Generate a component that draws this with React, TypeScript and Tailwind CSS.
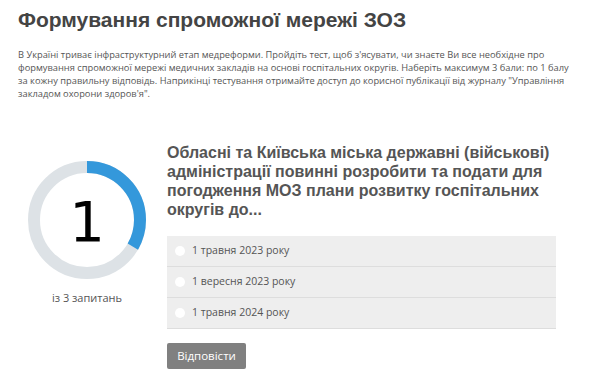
import React from "react";

const body = { fontFamily: '"Open Sans", "Noto Sans", sans-serif' };
const arial = { fontFamily: '"Liberation Sans", Arial, sans-serif' };
const dejavu = { fontFamily: '"DejaVu Sans", sans-serif' };

function Ring() {
  const r = 53;
  const c = 2 * Math.PI * r;
  return (
    <svg width="120" height="120" viewBox="0 0 120 120" className="block">
      <circle cx="60" cy="60" r={r} fill="none" stroke="#dde2e6" strokeWidth="12" />
      <circle
        cx="60"
        cy="60"
        r={r}
        fill="none"
        stroke="#3498db"
        strokeWidth="12"
        strokeDasharray={`${c / 3} ${c}`}
        transform="rotate(-90 60 60)"
      />
    </svg>
  );
}

export default function App() {
  const options = ["1 травня 2023 року", "1 вересня 2023 року", "1 травня 2024 року"];
  return (
    <div className="w-[600px] h-[384px] bg-white overflow-hidden px-[18px]">
      <h1 style={arial} className="pt-[6px] text-[21px] leading-[28px] font-bold text-[#444]">
        Формування спроможної мережі ЗОЗ
      </h1>
      <p style={body} className="mt-[14px] text-[9.3px] leading-[13px] text-[#555] whitespace-nowrap">
        В Україні триває інфраструктурний етап медреформи. Пройдіть тест, щоб з'ясувати, чи знаєте Ви все необхідне про
        <br />
        формування спроможної мережі медичних закладів на основі госпітальних округів. Наберіть максимум 3 бали: по 1 балу
        <br />
        за кожну правильну відповідь. Наприкінці тестування отримайте доступ до корисної публікації від журналу "Управління
        <br />
        закладом охорони здоров'я".
      </p>
      <div className="flex mt-[43px]">
        <div className="w-[149px] flex flex-col items-center pt-[17px]">
          <div className="relative w-[120px] h-[120px] ml-[-11px]">
            <Ring />
            <div
              style={dejavu}
              className="absolute inset-0 flex items-center justify-center text-[56px] font-normal text-black leading-none pt-[3px]"
            >
              1
            </div>
          </div>
          <div style={body} className="mt-[10px] ml-[-11px] text-[11px] text-[#555]">
            із 3 запитань
          </div>
        </div>
        <div className="w-[389px]">
          <h2 style={arial} className="text-[16px] leading-[19px] font-bold text-[#555]">
            Обласні та Київська міська державні (військові) адміністрації повинні розробити та подати для погодження МОЗ плани
            розвитку госпітальних округів до...
          </h2>
          <div className="mt-[17px] bg-[#eeeeee]">
            {options.map((o) => (
              <div key={o} className="h-[31px] flex items-center border-b border-[#dddddd] pl-[8px]">
                <span className="w-[10px] h-[10px] rounded-full bg-white mr-[7px]" />
                <span style={body} className="text-[10.5px] text-[#555]">
                  {o}
                </span>
              </div>
            ))}
          </div>
          <button
            style={body}
            className="mt-[14px] w-[79px] h-[26px] bg-[#808080] text-white text-[11.5px] rounded-[2px]"
          >
            Відповісти
          </button>
        </div>
      </div>
    </div>
  );
}
